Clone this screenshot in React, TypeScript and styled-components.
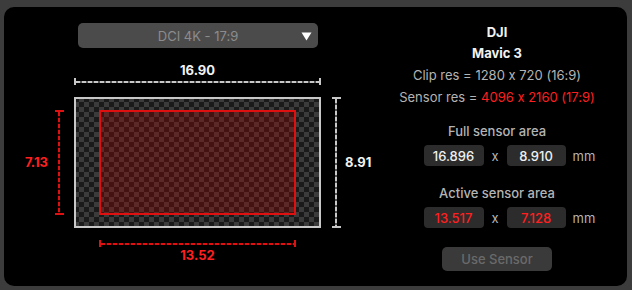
import React from "react";
import styled, { createGlobalStyle } from "styled-components";

const GlobalStyle = createGlobalStyle`
  html, body {
    margin: 0;
    padding: 0;
    background: #3c3c3c;
    font-family: Inter, "Liberation Sans", Arial, sans-serif;
    font-feature-settings: "calt" 0;
    -webkit-font-smoothing: antialiased;
  }
`;

const RED = "#ff1f1f";

const Panel = styled.div`
  margin: 7px 5px 4px 4px;
  height: 279px;
  background: #000;
  border-radius: 10px;
  display: flex;
`;

const LeftCol = styled.div`
  width: 376px;
  display: flex;
  flex-direction: column;
`;

const Dropdown = styled.div`
  margin: 16px 0 0 74px;
  width: 240px;
  height: 25px;
  box-sizing: border-box;
  border-radius: 5px;
  background: #4b4b4b;
  display: flex;
  align-items: center;
  justify-content: center;
  position: relative;
  color: #8c8c8c;
  font-size: 13px;
`;

const Arrow = styled.svg`
  position: absolute;
  right: 6px;
  top: 9px;
`;

const Diagram = styled.div`
  margin-top: 15px;
  display: grid;
  grid-template-columns: 50px 20px 247px 20px auto;
  grid-template-rows: 15px 19px 131px 19px 16px;
`;

const DimLabel = styled.div<{ $red?: boolean }>`
  font-size: 13px;
  font-weight: 700;
  line-height: 15px;
  color: ${(p) => (p.$red ? RED : "#f2f2f2")};
`;

const TopLabel = styled(DimLabel)`
  grid-column: 3;
  grid-row: 1;
  text-align: center;
`;

const BottomLabel = styled(DimLabel)`
  grid-column: 3;
  grid-row: 5;
  text-align: center;
  line-height: 16px;
`;

const SideLabel = styled(DimLabel)<{ $col: number }>`
  grid-column: ${(p) => p.$col};
  grid-row: 3;
  align-self: center;
  text-align: ${(p) => (p.$col === 1 ? "right" : "left")};
  padding: ${(p) => (p.$col === 1 ? "0 6px 0 0" : "0 0 0 4px")};
`;

const HDim = styled.div<{ $row: number; $align: string }>`
  grid-column: 3;
  grid-row: ${(p) => p.$row};
  align-self: ${(p) => p.$align};
  justify-self: center;
  height: 7px;
  display: flex;
  align-items: center;
`;

const VDim = styled.div<{ $col: number }>`
  grid-column: ${(p) => p.$col};
  grid-row: 3;
  align-self: center;
  justify-self: ${(p) => (p.$col === 2 ? "start" : "end")};
  width: 10px;
  display: flex;
  flex-direction: column;
  align-items: center;
`;

const HCap = styled.div<{ $red?: boolean }>`
  width: 2px;
  height: 7px;
  background: ${(p) => (p.$red ? "#e01010" : "#c8c8c8")};
`;

const VCap = styled.div<{ $red?: boolean }>`
  width: 9px;
  height: 2px;
  background: ${(p) => (p.$red ? "#e01010" : "#c8c8c8")};
`;

const HLine = styled.div<{ $red?: boolean }>`
  flex: 1;
  height: 2px;
  background: ${(p) =>
    p.$red
      ? "repeating-linear-gradient(90deg, #e01010 0 4px, #3a0000 4px 6px)"
      : "repeating-linear-gradient(90deg, #c8c8c8 0 4px, #555 4px 6px)"};
`;

const VLine = styled.div<{ $red?: boolean }>`
  flex: 1;
  width: 2px;
  background: ${(p) =>
    p.$red
      ? "repeating-linear-gradient(180deg, #e01010 0 4px, #3a0000 4px 6px)"
      : "repeating-linear-gradient(180deg, #c8c8c8 0 4px, #555 4px 6px)"};
`;

const SensorFrame = styled.div`
  grid-column: 3;
  grid-row: 3;
  box-sizing: border-box;
  border: 2px solid #c8c8c8;
  background: repeating-conic-gradient(#3b3b3b 0 25%, #1a1a1a 0 50%) -2px -2px / 10px 10px;
  display: flex;
  align-items: center;
  justify-content: center;
`;

const ActiveArea = styled.div`
  box-sizing: border-box;
  border: 2px solid #e01010;
  background: rgba(170, 0, 0, 0.3);
`;

const RightCol = styled.div`
  flex: 1;
  padding: 15px 13px 0 0;
  display: flex;
  flex-direction: column;
  align-items: center;
  font-size: 13px;
  color: #b4b4b4;
`;

const Line = styled.div<{ $bold?: boolean; $gap?: number }>`
  margin-top: ${(p) => p.$gap ?? 0}px;
  line-height: 21px;
  font-weight: ${(p) => (p.$bold ? 700 : 400)};
  color: ${(p) => (p.$bold ? "#f2f2f2" : "#b4b4b4")};
  white-space: nowrap;
`;

const Red = styled.span`
  color: ${RED};
`;

const SectionTitle = styled.div<{ $top: number }>`
  margin-top: ${(p) => p.$top}px;
  line-height: 20px;
  font-weight: 500;
  color: #b4b4b4;
`;

const ValueRow = styled.div`
  margin: 4px 0 0 -5px;
  width: 100%;
  display: grid;
  grid-template-columns: 1fr 60px 23px 59px 1fr;
  align-items: center;
`;

const ValueBox = styled.div<{ $red?: boolean }>`
  height: 21px;
  border-radius: 4px;
  background: #2c2c2c;
  display: flex;
  align-items: center;
  justify-content: center;
  font-weight: 500;
  font-size: 13px;
  color: ${(p) => (p.$red ? RED : "#f0f0f0")};
`;

const Times = styled.div`
  text-align: center;
  color: #b4b4b4;
`;

const Unit = styled.div`
  padding-left: 7px;
  color: #b4b4b4;
`;

const UseButton = styled.div`
  margin-top: 19px;
  width: 110px;
  height: 24px;
  border-radius: 5px;
  background: #3a3a3a;
  color: #6a6a6a;
  display: flex;
  align-items: center;
  justify-content: center;
  font-size: 13px;
  font-weight: 500;
`;

const sensor = {
  make: "DJI",
  model: "Mavic 3",
  clip: "1280 x 720 (16:9)",
  res: "4096 x 2160 (17:9)",
  full: { w: 16.896, h: 8.91 },
  active: { w: 13.517, h: 7.128 },
};

const FRAME_W = 247;
const FRAME_H = 131;

export default function App() {
  const aw = (FRAME_W * sensor.active.w) / sensor.full.w;
  const ah = (FRAME_H * sensor.active.h) / sensor.full.h;
  return (
    <>
      <GlobalStyle />
      <Panel>
        <LeftCol>
          <Dropdown>
            DCI 4K - 17:9
            <Arrow width="11" height="9" viewBox="0 0 11 9">
              <path d="M0.5 0.5 H10.5 L5.5 8.5 Z" fill="#fff" />
            </Arrow>
          </Dropdown>
          <Diagram>
            <TopLabel>{sensor.full.w.toFixed(2)}</TopLabel>
            <HDim $row={2} $align="start" style={{ width: FRAME_W }}>
              <HCap />
              <HLine />
              <HCap />
            </HDim>
            <SideLabel $col={1} $red>
              {sensor.active.h.toFixed(2)}
            </SideLabel>
            <VDim $col={2} style={{ height: ah }}>
              <VCap $red />
              <VLine $red />
              <VCap $red />
            </VDim>
            <SensorFrame>
              <ActiveArea style={{ width: aw, height: ah }} />
            </SensorFrame>
            <VDim $col={4} style={{ height: FRAME_H }}>
              <VCap />
              <VLine />
              <VCap />
            </VDim>
            <SideLabel $col={5}>{sensor.full.h.toFixed(2)}</SideLabel>
            <HDim $row={4} $align="end" style={{ width: aw }}>
              <HCap $red />
              <HLine $red />
              <HCap $red />
            </HDim>
            <BottomLabel $red>{sensor.active.w.toFixed(2)}</BottomLabel>
          </Diagram>
        </LeftCol>
        <RightCol>
          <Line $bold>{sensor.make}</Line>
          <Line $bold>{sensor.model}</Line>
          <Line $gap={1}>Clip res = {sensor.clip}</Line>
          <Line $gap={1}>
            Sensor res = <Red>{sensor.res}</Red>
          </Line>
          <SectionTitle $top={13}>Full sensor area</SectionTitle>
          <ValueRow>
            <span />
            <ValueBox>{sensor.full.w.toFixed(3)}</ValueBox>
            <Times>x</Times>
            <ValueBox>{sensor.full.h.toFixed(3)}</ValueBox>
            <Unit>mm</Unit>
          </ValueRow>
          <SectionTitle $top={17}>Active sensor area</SectionTitle>
          <ValueRow>
            <span />
            <ValueBox $red>{sensor.active.w.toFixed(3)}</ValueBox>
            <Times>x</Times>
            <ValueBox $red>{sensor.active.h.toFixed(3)}</ValueBox>
            <Unit>mm</Unit>
          </ValueRow>
          <UseButton>Use Sensor</UseButton>
        </RightCol>
      </Panel>
    </>
  );
}
